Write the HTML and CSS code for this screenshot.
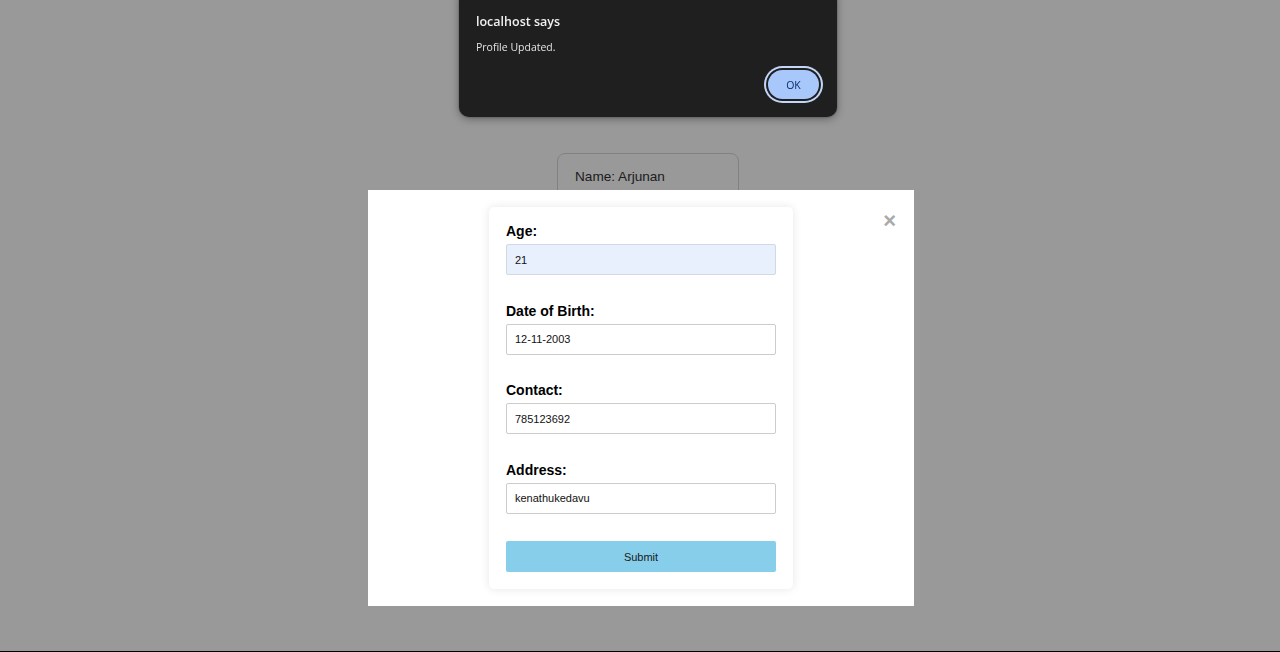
FILE: index.html
```html
<!DOCTYPE html>
<html lang="en">
<head>
<meta charset="utf-8">
<title>Profile</title>
<link rel="stylesheet" href="styles.css">
</head>
<body>
<main class="page">
  <div class="profile-card">
    <p class="profile-line">Name: Arjunan</p>
  </div>
</main>

<div class="overlay">
  <div class="modal">
    <span class="close">&times;</span>
    <form class="form-card">
      <div class="field">
        <label class="field-label">Age:</label>
        <input class="field-input autofill" type="text" value="21">
      </div>
      <div class="field">
        <label class="field-label">Date of Birth:</label>
        <input class="field-input" type="text" value="12-11-2003">
      </div>
      <div class="field">
        <label class="field-label">Contact:</label>
        <input class="field-input" type="text" value="785123692">
      </div>
      <div class="field">
        <label class="field-label">Address:</label>
        <input class="field-input" type="text" value="kenathukedavu">
      </div>
      <button class="submit" type="button">Submit</button>
    </form>
  </div>
</div>

<div class="alert">
  <div class="alert-title">localhost says</div>
  <div class="alert-msg">Profile Updated.</div>
  <div class="alert-actions">
    <button class="alert-ok" type="button">OK</button>
  </div>
</div>

<div class="bottom-line"></div>
</body>
</html>
```

FILE: styles.css
```css
* { box-sizing: border-box; }

html, body {
  margin: 0;
  padding: 0;
  height: 100%;
}

body {
  background: #ffffff;
  font-family: "Liberation Sans", Arial, sans-serif;
  color: #333;
  overflow: hidden;
}

.page {
  display: flex;
  justify-content: center;
  padding-top: 153px;
  padding-left: 16px;
}

.profile-card {
  width: 182px;
  border: 1px solid #d8d8d8;
  border-radius: 8px;
  padding: 14px 17px;
  height: 120px;
}

.profile-line {
  margin: 0;
  font-size: 13.6px;
  line-height: 18px;
  color: #333;
}

.overlay {
  position: fixed;
  inset: 0;
  background: rgba(0, 0, 0, 0.4);
}

.modal {
  position: absolute;
  left: calc(50% - 272px);
  top: 190px;
  width: 546px;
  height: 416px;
  background: #fff;
  display: flex;
  justify-content: center;
  padding-top: 17px;
}

.close {
  position: absolute;
  top: 20px;
  right: 18px;
  font-family: "Liberation Sans", Arial, sans-serif;
  font-size: 22px;
  line-height: 22px;
  font-weight: bold;
  color: #aaa;
}

.form-card {
  width: 304px;
  height: 382px;
  background: #fff;
  border-radius: 5px;
  box-shadow: 0 0 10px rgba(0, 0, 0, 0.1);
  padding: 16px 17px 17px;
  display: flex;
  flex-direction: column;
}

.field {
  display: flex;
  flex-direction: column;
  margin-bottom: 27.5px;
}

.field-label {
  font-size: 14px;
  line-height: 16px;
  font-weight: bold;
  color: #000;
  margin-bottom: 5px;
}

.field-input {
  width: 270px;
  height: 31px;
  border: 1px solid #ccc;
  border-radius: 2px;
  padding: 0 8px;
  font-family: "Liberation Sans", Arial, sans-serif;
  font-size: 11px;
  color: #111;
  background: #fff;
  outline: none;
}

.field-input.autofill {
  background: #e8f0fe;
  border-color: #d3d9e3;
}

.submit {
  margin-top: 0;
  width: 270px;
  height: 31px;
  flex: none;
  border: none;
  border-radius: 2px;
  background: #87ceeb;
  font-family: "Liberation Sans", Arial, sans-serif;
  font-size: 11px;
  color: #1a1a1a;
  padding: 0;
}

.alert {
  position: fixed;
  left: 459px;
  top: -12px;
  width: 378px;
  height: 129px;
  background: #1f1f1f;
  border-radius: 10px;
  box-shadow: 0 2px 8px rgba(0, 0, 0, 0.35), 0 0 2px rgba(0, 0, 0, 0.4);
  padding: 25px 17px 0 17px;
  font-family: "Open Sans", "Noto Sans", sans-serif;
  color: #e8e8e8;
  display: flex;
  flex-direction: column;
}

.alert-title {
  font-size: 12.5px;
  font-weight: 600;
  line-height: 18px;
  color: #f0f0f0;
}

.alert-msg {
  margin-top: 9px;
  font-size: 10.5px;
  line-height: 14px;
  color: #e3e3e3;
}

.alert-actions {
  display: flex;
  justify-content: flex-end;
  margin-top: 16px;
  padding-right: 1px;
}

.alert-ok {
  width: 51px;
  height: 29px;
  border: none;
  border-radius: 999px;
  background: #a8c7fa;
  color: #062e6f;
  font-family: "Open Sans", "Noto Sans", sans-serif;
  font-size: 10.5px;
  font-weight: 500;
  box-shadow: 0 0 0 2px #1f1f1f, 0 0 0 4px #c3d6f8;
  padding: 0;
}

.bottom-line {
  position: fixed;
  left: 0;
  right: 0;
  bottom: 0;
  height: 1px;
  background: #000;
}
```
